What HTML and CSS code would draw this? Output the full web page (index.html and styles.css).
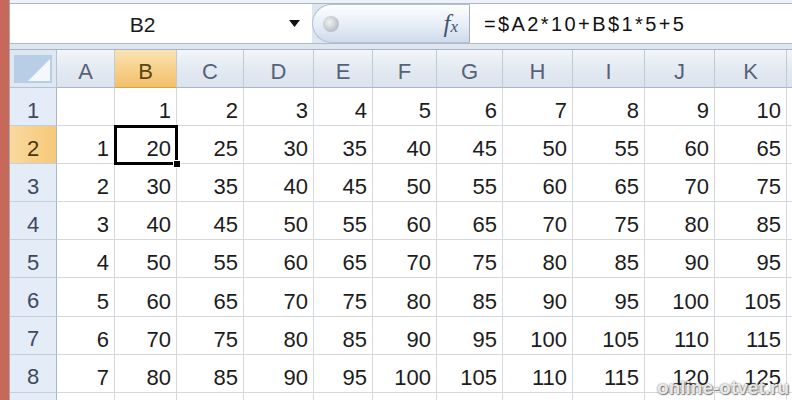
FILE: index.html
```html
<!DOCTYPE html>
<html>
<head>
  <title>Sheet</title>
  <link rel="stylesheet" href="styles.css">
</head>
<body>
  <div class="window">
    <div class="edge"></div>
    <div class="app">
      <div class="top-strip"></div>
      <div class="formula-bar">
        <div class="name-box">
          <span class="name">B2</span>
          <svg class="arrow" width="11" height="7" viewBox="0 0 11 7"><path d="M0 0h11L5.5 7z" fill="#111"/></svg>
        </div>
        <div class="fx-box">
          <span class="dimple"></span>
          <span class="fx">f<span class="x">x</span></span>
        </div>
        <div class="formula">=$A2*10+B$1*5+5</div>
      </div>
      <div class="gap"></div>

      <div class="sheet">
        <div class="corner">
          <svg width="38" height="28" viewBox="0 0 38 28"><rect x="0" y="0" width="38" height="28" fill="#b8cde6"/><path d="M36 4V26H14z" fill="#f4f7fb"/></svg>
        </div>
        <div class="ch">A</div>
        <div class="ch sel">B</div>
        <div class="ch">C</div>
        <div class="ch">D</div>
        <div class="ch">E</div>
        <div class="ch">F</div>
        <div class="ch">G</div>
        <div class="ch">H</div>
        <div class="ch">I</div>
        <div class="ch">J</div>
        <div class="ch">K</div>
        <div class="ch"></div>

        <div class="rh">1</div>
        <div class="c"></div><div class="c">1</div><div class="c">2</div><div class="c">3</div><div class="c">4</div><div class="c">5</div><div class="c">6</div><div class="c">7</div><div class="c">8</div><div class="c">9</div><div class="c">10</div><div class="c"></div>

        <div class="rh sel">2</div>
        <div class="c">1</div><div class="c active">20</div><div class="c">25</div><div class="c">30</div><div class="c">35</div><div class="c">40</div><div class="c">45</div><div class="c">50</div><div class="c">55</div><div class="c">60</div><div class="c">65</div><div class="c"></div>

        <div class="rh">3</div>
        <div class="c">2</div><div class="c">30</div><div class="c">35</div><div class="c">40</div><div class="c">45</div><div class="c">50</div><div class="c">55</div><div class="c">60</div><div class="c">65</div><div class="c">70</div><div class="c">75</div><div class="c"></div>

        <div class="rh">4</div>
        <div class="c">3</div><div class="c">40</div><div class="c">45</div><div class="c">50</div><div class="c">55</div><div class="c">60</div><div class="c">65</div><div class="c">70</div><div class="c">75</div><div class="c">80</div><div class="c">85</div><div class="c"></div>

        <div class="rh">5</div>
        <div class="c">4</div><div class="c">50</div><div class="c">55</div><div class="c">60</div><div class="c">65</div><div class="c">70</div><div class="c">75</div><div class="c">80</div><div class="c">85</div><div class="c">90</div><div class="c">95</div><div class="c"></div>

        <div class="rh">6</div>
        <div class="c">5</div><div class="c">60</div><div class="c">65</div><div class="c">70</div><div class="c">75</div><div class="c">80</div><div class="c">85</div><div class="c">90</div><div class="c">95</div><div class="c">100</div><div class="c">105</div><div class="c"></div>

        <div class="rh">7</div>
        <div class="c">6</div><div class="c">70</div><div class="c">75</div><div class="c">80</div><div class="c">85</div><div class="c">90</div><div class="c">95</div><div class="c">100</div><div class="c">105</div><div class="c">110</div><div class="c">115</div><div class="c"></div>

        <div class="rh">8</div>
        <div class="c">7</div><div class="c">80</div><div class="c">85</div><div class="c">90</div><div class="c">95</div><div class="c">100</div><div class="c">105</div><div class="c">110</div><div class="c">115</div><div class="c">120</div><div class="c">125</div><div class="c"></div>

        <div class="rh"></div>
        <div class="c"></div><div class="c"></div><div class="c"></div><div class="c"></div><div class="c"></div><div class="c"></div><div class="c"></div><div class="c"></div><div class="c"></div><div class="c"></div><div class="c"></div><div class="c"></div>
      </div>
    </div>
    <div class="watermark">online-otvet.ru</div>
  </div>
</body>
</html>
```

FILE: styles.css
```css
    body {
      margin: 0;
      font-family: "Liberation Sans", Arial, sans-serif;
      background: #fff;
      overflow: hidden;
    }

    .window {
      position: relative;
      display: flex;
      width: 792px;
      height: 400px;
      overflow: hidden;
    }

    .edge {
      width: 9px;
      flex: none;
      background: #c8685a;
      border-right: 1px solid #a9a9a9;
    }

    .app {
      flex: 1;
      min-width: 0;
      display: flex;
      flex-direction: column;
      background: #dfe6ef;
    }

    .app > div {
      flex: none;
    }

    .top-strip {
      height: 3px;
      background: #eef1f5;
      border-bottom: 1px solid #a8b6c7;
    }

    .formula-bar {
      display: flex;
      height: 39px;
      border-bottom: 1px solid #aebbcb;
    }

    .name-box {
      width: 302px;
      flex: none;
      display: flex;
      align-items: center;
      background: #fff;
    }

    .name {
      flex: 1;
      text-align: center;
      font-size: 21px;
      color: #1a1a1a;
      padding-right: 14px;
      padding-top: 2px;
    }

    .arrow {
      margin-right: 12px;
    }

    .fx-box {
      width: 158px;
      flex: none;
      display: flex;
      align-items: center;
      justify-content: space-between;
      background: linear-gradient(#fdfeff, #e6edf6 55%, #cfdbea);
      border: 1px solid #b3c2d5;
      border-right-color: #9eadc0;
      border-radius: 20px 0 0 20px;
      box-sizing: border-box;
    }

    .dimple {
      width: 16px;
      height: 16px;
      margin-left: 10px;
      border-radius: 50%;
      background: radial-gradient(circle at 40% 40%, #f2f2f2, #b9bec6 70%, #d8dde4);
    }

    .fx {
      font-family: "Liberation Serif", serif;
      font-style: italic;
      font-size: 25px;
      color: #44546b;
      margin-right: 11px;
    }

    .fx .x {
      font-size: 17px;
    }

    .formula {
      flex: 1;
      display: flex;
      align-items: center;
      padding-left: 14px;
      padding-top: 2px;
      background: #fff;
      font-size: 20px;
      letter-spacing: 2.4px;
      color: #111;
    }

    .gap {
      height: 5px;
      background: #dfe6ef;
      border-bottom: 1px solid #a5b3c5;
    }

    .sheet {
      display: grid;
      grid-template-columns: 47px 58px 62px 67px 70px 59px 64px 66px 70px 72px 70px 72px 1fr;
      grid-template-rows: 38px repeat(9, 38.1px);
      background: #fff;
    }

    .corner {
      display: flex;
      align-items: center;
      justify-content: center;
      background: #dfe7f1;
      border-right: 1px solid #b5c2d2;
      border-bottom: 1px solid #b5c2d2;
    }

    .ch {
      display: flex;
      align-items: center;
      justify-content: center;
      padding-top: 7px;
      box-sizing: border-box;
      font-size: 22px;
      color: #56627a;
      background: linear-gradient(#f3f6fa, #e4eaf2 50%, #dbe3ed);
      border-right: 1px solid #c0cad7;
      border-bottom: 1px solid #a9b7c8;
    }

    .ch.sel {
      color: #5a4614;
      background: linear-gradient(#fbe3b4, #f7d18c 50%, #f2c06a);
      border-bottom-color: #d8a448;
    }

    .rh {
      display: flex;
      align-items: center;
      justify-content: center;
      padding-top: 8px;
      box-sizing: border-box;
      font-size: 22px;
      color: #3d4a5e;
      background: #e4ecf7;
      border-right: 1px solid #a9b7c8;
      border-bottom: 1px solid #c4cfdd;
    }

    .rh.sel {
      color: #4a3510;
      background: linear-gradient(90deg, #f9d9a0, #f5c977);
    }

    .c {
      display: flex;
      align-items: center;
      justify-content: flex-end;
      padding: 9px 5px 0 0;
      box-sizing: border-box;
      font-size: 22px;
      color: #1c1c1c;
      border-right: 1px solid #d5d9df;
      border-bottom: 1px solid #d5d9df;
    }

    .c.active {
      position: relative;
      z-index: 1;
      outline: 3px solid #000;
      outline-offset: -2px;
    }

    .c.active::after {
      content: "";
      position: absolute;
      right: -5px;
      bottom: -5px;
      width: 6px;
      height: 6px;
      background: #000;
      border: 1px solid #fff;
    }

    .watermark {
      position: absolute;
      right: 3px;
      bottom: 1px;
      font-size: 19px;
      font-weight: bold;
      color: rgba(255, 255, 255, 0.85);
      text-shadow: 0 0 2px rgba(80, 80, 80, 0.9), 1px 1px 1px rgba(60, 60, 60, 0.6);
      z-index: 2;
    }
```
